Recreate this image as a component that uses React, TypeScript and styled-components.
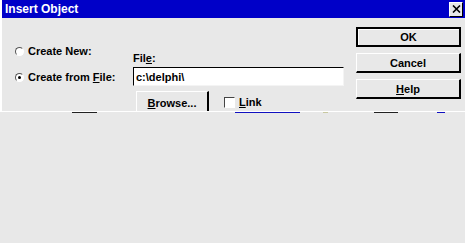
import React from "react";
import styled, { createGlobalStyle, css } from "styled-components";

const Global = createGlobalStyle`
  html, body { margin: 0; padding: 0; background: #e8e8e8; }
  body { font-family: "Liberation Sans", Arial, sans-serif; }
`;

const Screen = styled.div`
  width: 465px;
  height: 243px;
  background: #e8e8e8;
  overflow: hidden;
`;

const Dialog = styled.div`
  height: 111px;
  border-left: 2px solid #ffffff;
  border-bottom: 1px solid #ffffff;
  display: flex;
  flex-direction: column;
  overflow: hidden;
`;

const TitleBar = styled.div`
  height: 18px;
  background: #0000c8;
  display: flex;
  align-items: center;
  justify-content: space-between;
  padding: 0 2px 0 3px;
  flex-shrink: 0;
`;

const TitleText = styled.span`
  color: #ffffff;
  font-weight: 700;
  font-size: 12px;
  letter-spacing: 0px;
`;

const CloseBox = styled.div`
  width: 12px;
  height: 13px;
  background: #e8e8e8;
  border-top: 1px solid #ffffff;
  border-left: 1px solid #ffffff;
  border-right: 1px solid #000000;
  border-bottom: 1px solid #000000;
  display: flex;
  align-items: center;
  justify-content: center;
`;

const Content = styled.div`
  flex: 1;
  display: flex;
  padding-left: 13px;
  font-size: 11px;
  color: #000;
`;

const LeftCol = styled.div`
  width: 118px;
  padding-top: 26px;
  display: flex;
  flex-direction: column;
  gap: 12px;
`;

const RadioRow = styled.div`
  height: 14px;
  display: flex;
  align-items: center;
  gap: 4px;
  font-weight: 700;
  white-space: nowrap;
`;

const Radio = styled.span<{ $checked?: boolean }>`
  width: 7px;
  height: 7px;
  border-radius: 50%;
  background: #ffffff;
  border: 1px solid;
  border-color: #555 #fff #fff #555;
  display: flex;
  align-items: center;
  justify-content: center;
  ${(p) =>
    p.$checked &&
    css`
      &::after {
        content: "";
        width: 3px;
        height: 3px;
        border-radius: 50%;
        background: #000;
      }
    `}
`;

const MidCol = styled.div`
  width: 211px;
  padding-top: 34px;
  display: flex;
  flex-direction: column;
`;

const FieldLabel = styled.div`
  height: 12px;
  line-height: 12px;
  font-weight: 700;
  margin-bottom: 3px;
`;

const Input = styled.div`
  height: 17px;
  background: #ffffff;
  border-top: 1px solid #000;
  border-left: 1px solid #000;
  border-right: 1px solid #f4f4f4;
  border-bottom: 1px solid #f4f4f4;
  display: flex;
  align-items: center;
  padding-left: 2px;
  font-weight: 700;
`;

const BrowseRow = styled.div`
  margin-top: 5px;
  display: flex;
  align-items: center;
  padding-left: 3px;
`;

const BrowseButton = styled.div`
  width: 70px;
  height: 21px;
  border-left: 1px solid #ffffff;
  border-top: 1px solid #ffffff;
  border-right: 2px solid #000000;
  display: flex;
  align-items: center;
  justify-content: center;
  font-weight: 700;
`;

const CheckRow = styled.div`
  margin-left: 15px;
  display: flex;
  align-items: center;
  gap: 4px;
  font-weight: 700;
`;

const Check = styled.span`
  width: 9px;
  height: 9px;
  background: #ffffff;
  border: 1px solid;
  border-color: #444 #fff #fff #444;
`;

const RightCol = styled.div`
  margin-left: 12px;
  width: 105px;
  padding-top: 9px;
  display: flex;
  flex-direction: column;
  gap: 6px;
`;

const Button = styled.div<{ $default?: boolean }>`
  height: 20px;
  box-sizing: border-box;
  background: #e8e8e8;
  display: flex;
  align-items: center;
  justify-content: center;
  font-weight: 700;
  border-top: 1px solid #ffffff;
  border-left: 1px solid #ffffff;
  border-right: 2px solid #000000;
  border-bottom: 2px solid #000000;
  ${(p) =>
    p.$default &&
    css`
      outline: 1px solid #000;
      outline-offset: -1px;
      border-top: 2px solid #000;
      border-left: 2px solid #000;
      box-shadow: inset 1px 1px 0 #ffffff;
    `}
`;

const U = styled.span`
  text-decoration: underline;
`;

const Fragments = styled.div`
  height: 2px;
  display: flex;
`;

const Frag = styled.span<{ $c: string }>`
  height: 1px;
  background: ${(p) => p.$c};
  flex-shrink: 0;
`;

const fragments: [number, string][] = [
  [72, "transparent"],
  [25, "#222"],
  [138, "transparent"],
  [65, "#1010c0"],
  [23, "transparent"],
  [5, "#c8c8a0"],
  [46, "transparent"],
  [24, "#222"],
  [39, "transparent"],
  [8, "#1010c0"],
];

export default function App() {
  return (
    <Screen>
      <Global />
      <Dialog>
        <TitleBar>
          <TitleText>Insert Object</TitleText>
          <CloseBox>
            <svg width="9" height="8" viewBox="0 0 9 8">
              <path d="M1 0.5 L8 7.5 M8 0.5 L1 7.5" stroke="#000" strokeWidth="1.6" />
            </svg>
          </CloseBox>
        </TitleBar>
        <Content>
          <LeftCol>
            <RadioRow>
              <Radio />
              Create New:
            </RadioRow>
            <RadioRow>
              <Radio $checked />
              <span>
                Create from <U>F</U>ile:
              </span>
            </RadioRow>
          </LeftCol>
          <MidCol>
            <FieldLabel>
              Fil<U>e</U>:
            </FieldLabel>
            <Input>c:\delphi\</Input>
            <BrowseRow>
              <BrowseButton>
                <span>
                  <U>B</U>rowse...
                </span>
              </BrowseButton>
              <CheckRow>
                <Check />
                <span>
                  <U>L</U>ink
                </span>
              </CheckRow>
            </BrowseRow>
          </MidCol>
          <RightCol>
            <Button $default>OK</Button>
            <Button>Cancel</Button>
            <Button>
              <span>
                <U>H</U>elp
              </span>
            </Button>
          </RightCol>
        </Content>
      </Dialog>
      <Fragments>
        {fragments.map(([w, c], i) => (
          <Frag key={i} $c={c} style={{ width: w }} />
        ))}
      </Fragments>
    </Screen>
  );
}
